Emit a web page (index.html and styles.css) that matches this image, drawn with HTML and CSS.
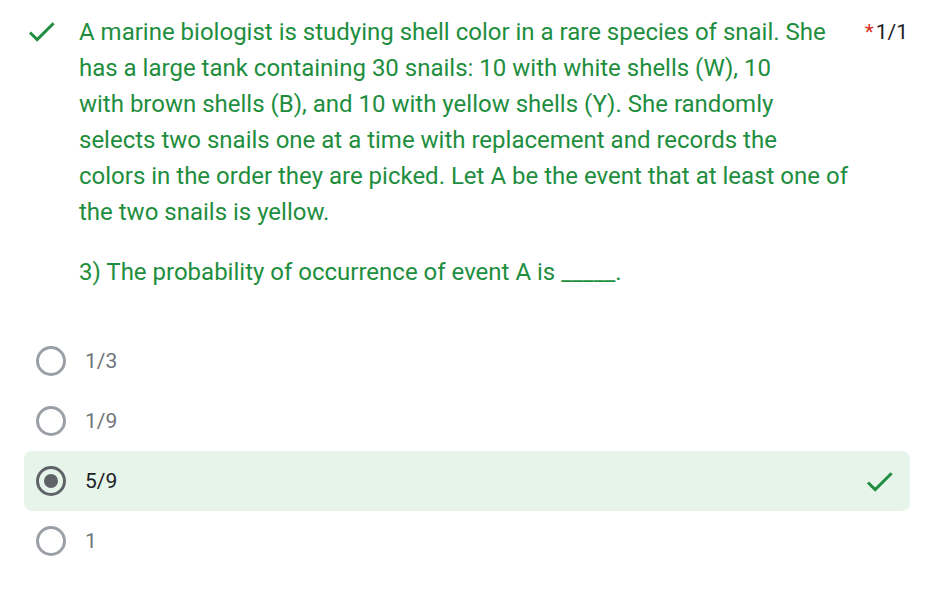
FILE: index.html
```html
<!DOCTYPE html>
<html>
<head>
<meta charset="utf-8">
<link rel="stylesheet" href="styles.css">
</head>
<body>
<div class="card">
  <div class="header">
    <svg class="icon-check" width="35" height="35" viewBox="0 0 24 24"><path d="M9 16.17L4.83 12l-1.42 1.41L9 19 21 7l-1.41-1.41z" fill="#1e8e3e"/></svg>
    <div class="title">
      <div class="q">A marine biologist is studying shell color in a rare species of snail. She<br>has a large tank containing 30 snails: 10 with white shells (W), 10<br>with brown shells (B), and 10 with yellow shells (Y). She randomly<br>selects two snails one at a time with replacement and records the<br>colors in the order they are picked. Let A be the event that at least one of<br>the two snails is yellow.</div>
      <div class="q sub">3) The probability of occurrence of event A is <span class="blank">_____</span>.</div>
    </div>
    <div class="score"><span class="req">*</span>1/1</div>
  </div>
  <div class="options">
    <div class="opt"><span class="radio"></span><span class="label">1/3</span></div>
    <div class="opt"><span class="radio"></span><span class="label">1/9</span></div>
    <div class="opt correct"><span class="radio checked"></span><span class="label">5/9</span>
      <svg class="opt-check" width="35" height="35" viewBox="0 0 24 24"><path d="M9 16.17L4.83 12l-1.42 1.41L9 19 21 7l-1.41-1.41z" fill="#1e8e3e"/></svg>
    </div>
    <div class="opt"><span class="radio"></span><span class="label">1</span></div>
  </div>
</div>
</body>
</html>
```
FILE: styles.css
```css
html, body { margin: 0; padding: 0; background: #fff; }
body { font-family: Roboto, "Noto Sans", sans-serif; }
.card { padding: 14px 17px 0 24px; }
.header { display: flex; align-items: flex-start; }
.icon-check { width: 35px; height: 35px; margin: 0 20px 0 0; flex: none; }
.title { flex: 1; color: #1e8e3e; font-size: 24px; line-height: 36px; white-space: nowrap; }
.sub { margin-top: 24px; }
.blank { text-decoration: none; }
.score { margin-left: auto; font-size: 21px; line-height: 36px; color: #202124; padding-right: 2px; }
.req { color: #d93025; margin-right: 2px; }
.options { margin-top: 41px; }
.opt { display: flex; align-items: center; height: 60px; border-radius: 8px; padding-left: 12px; }
.opt.correct { background: #e6f4ea; }
.radio { width: 24px; height: 24px; border: 3px solid #9aa0a6; border-radius: 50%; box-sizing: content-box; flex: none; position: relative; }
.radio.checked { border-color: #5f6368; }
.radio.checked::after { content: ""; position: absolute; left: 5px; top: 5px; width: 14px; height: 14px; border-radius: 50%; background: #5f6368; }
.label { margin-left: 19px; font-size: 21px; color: #70757a; }
.correct .label { color: #202124; }
.opt-check { margin-left: auto; margin-right: 13px; }
```
